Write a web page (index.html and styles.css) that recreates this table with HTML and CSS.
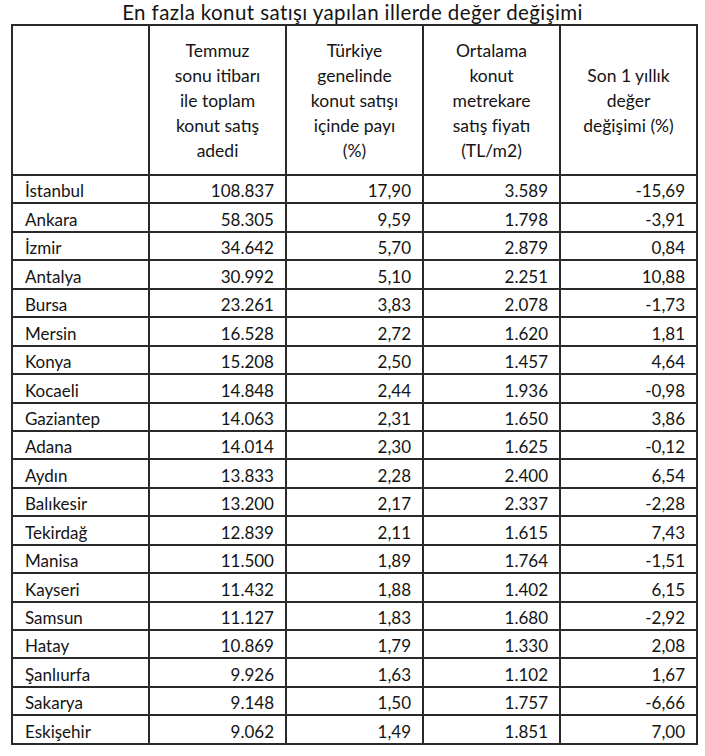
FILE: index.html
```html
<!DOCTYPE html>
<html lang="tr">
<head>
<meta charset="utf-8">
<title>En fazla konut satışı yapılan illerde değer değişimi</title>
<link rel="stylesheet" href="styles.css">
</head>
<body>
<h1 class="title">En fazla konut satışı yapılan illerde değer değişimi</h1>
<table class="data">
<colgroup><col class="c"><col class="c"><col class="c"><col class="c"><col class="c"></colgroup>
<thead>
<tr class="head">
<th></th>
<th>Temmuz<br>sonu itibarı<br>ile toplam<br>konut satış<br>adedi</th>
<th>Türkiye<br>genelinde<br>konut satışı<br>içinde payı<br>(%)</th>
<th>Ortalama<br>konut<br>metrekare<br>satış fiyatı<br>(TL/m2)</th>
<th>Son 1 yıllık<br>değer<br>değişimi (%)</th>
</tr>
</thead>
<tbody>
<tr><td class="name">İstanbul</td><td>108.837</td><td>17,90</td><td>3.589</td><td>-15,69</td></tr>
<tr><td class="name">Ankara</td><td>58.305</td><td>9,59</td><td>1.798</td><td>-3,91</td></tr>
<tr><td class="name">İzmir</td><td>34.642</td><td>5,70</td><td>2.879</td><td>0,84</td></tr>
<tr><td class="name">Antalya</td><td>30.992</td><td>5,10</td><td>2.251</td><td>10,88</td></tr>
<tr><td class="name">Bursa</td><td>23.261</td><td>3,83</td><td>2.078</td><td>-1,73</td></tr>
<tr><td class="name">Mersin</td><td>16.528</td><td>2,72</td><td>1.620</td><td>1,81</td></tr>
<tr><td class="name">Konya</td><td>15.208</td><td>2,50</td><td>1.457</td><td>4,64</td></tr>
<tr><td class="name">Kocaeli</td><td>14.848</td><td>2,44</td><td>1.936</td><td>-0,98</td></tr>
<tr><td class="name">Gaziantep</td><td>14.063</td><td>2,31</td><td>1.650</td><td>3,86</td></tr>
<tr><td class="name">Adana</td><td>14.014</td><td>2,30</td><td>1.625</td><td>-0,12</td></tr>
<tr><td class="name">Aydın</td><td>13.833</td><td>2,28</td><td>2.400</td><td>6,54</td></tr>
<tr><td class="name">Balıkesir</td><td>13.200</td><td>2,17</td><td>2.337</td><td>-2,28</td></tr>
<tr><td class="name">Tekirdağ</td><td>12.839</td><td>2,11</td><td>1.615</td><td>7,43</td></tr>
<tr><td class="name">Manisa</td><td>11.500</td><td>1,89</td><td>1.764</td><td>-1,51</td></tr>
<tr><td class="name">Kayseri</td><td>11.432</td><td>1,88</td><td>1.402</td><td>6,15</td></tr>
<tr><td class="name">Samsun</td><td>11.127</td><td>1,83</td><td>1.680</td><td>-2,92</td></tr>
<tr><td class="name">Hatay</td><td>10.869</td><td>1,79</td><td>1.330</td><td>2,08</td></tr>
<tr><td class="name">Şanlıurfa</td><td>9.926</td><td>1,63</td><td>1.102</td><td>1,67</td></tr>
<tr><td class="name">Sakarya</td><td>9.148</td><td>1,50</td><td>1.757</td><td>-6,66</td></tr>
<tr><td class="name">Eskişehir</td><td>9.062</td><td>1,49</td><td>1.851</td><td>7,00</td></tr>
</tbody>
</table>
</body>
</html>
```
FILE: styles.css
```css
html, body {
  margin: 0;
  padding: 0;
  background: #ffffff;
}
body {
  font-family: Lato, "Open Sans", "DejaVu Sans", sans-serif;
  color: #141414;
  width: 705px;
}
.title {
  margin: 0;
  font-size: 20.5px;
  letter-spacing: 0.4px;
  font-weight: normal;
  line-height: 24.6px;
  height: 24px;
  text-align: center;
  color: #141414;
}
.data {
  margin-left: 11px;
  border-collapse: collapse;
  table-layout: fixed;
  width: 685px;
  font-size: 17px;
}
.data col.c {
  width: 137px;
}
.data th,
.data td {
  border: 2px solid #2a2a2a;
  padding: 0 11px 1px 11px;
}
.data th {
  font-weight: normal;
  text-align: center;
  vertical-align: middle;
  line-height: 25px;
  font-size: 17.5px;
  padding: 0 4px;
}
.data tr.head {
  height: 150px;
}
.data tbody tr {
  height: 28.45px;
}
.data td {
  text-align: right;
  vertical-align: bottom;
  line-height: 20px;
}
.data td.name {
  text-align: left;
  padding-left: 12px;
}
```
